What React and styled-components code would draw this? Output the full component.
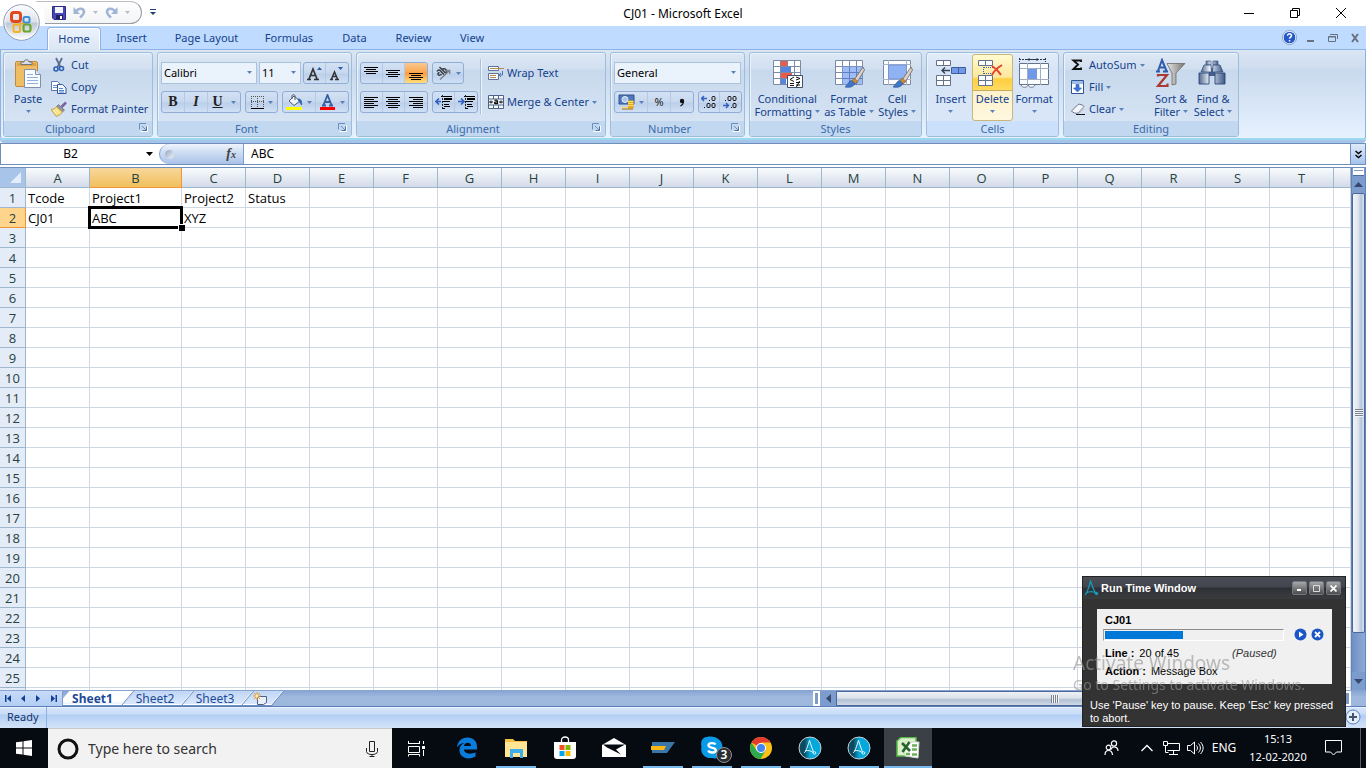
import React from "react";
import styled, { createGlobalStyle, css } from "styled-components";

const ui = `"Noto Sans", "Open Sans", sans-serif`;

const Global = createGlobalStyle`
  * { box-sizing: border-box; }
  html, body { margin: 0; height: 100%; overflow: hidden; }
  body { font: 11px/14px ${ui}; color: #15428b; background: #fff; }
  button, input, select { font: inherit; color: inherit; border: 0; padding: 0; margin: 0; background: none; border-radius: 0; outline: 0; }
  button { white-space: nowrap; }
  svg { display: block; flex: none; }
`;

/* ---------- shell ---------- */
const Desktop = styled.div`
  display: flex;
  flex-direction: column;
  height: 100vh;
  overflow: hidden;
`;

const TitleBar = styled.header`
  position: relative;
  display: grid;
  grid-template-columns: 1fr auto 1fr;
  align-items: center;
  height: 26px;
  background: #fff;
  color: #000;
`;

const OfficeButton = styled.button`
  position: absolute;
  z-index: 3;
  left: 3px;
  top: 4px;
`;

const QuickAccess = styled.div`
  display: flex;
  align-items: center;
  align-self: start;
  margin-left: 36px;
  height: 25px;
`;

const QuickPill = styled.div`
  display: flex;
  align-items: center;
  gap: 7px;
  width: 106px;
  height: 23px;
  padding-left: 16px;
  margin-right: 8px;
  border: 1px solid #9a9da3;
  border-left: 0;
  border-top-color: #b9bcc2;
  border-radius: 0 12px 12px 0;
  background: linear-gradient(#fff, #f3f4f6);
  clip-path: polygon(0 0, 100% 0, 100% 100%, 9px 100%, 8px 40%);
`;

const TitleText = styled.h1`
  margin: 0;
  padding-top: 2px;
  font: 400 12px/16px ${ui};
`;

const CaptionButtons = styled.div`
  display: flex;
  justify-content: flex-end;
  margin-right: 2px;
  button {
    display: grid;
    place-items: center;
    width: 46px;
    height: 26px;
  }
`;

const TabBar = styled.nav`
  display: flex;
  align-items: flex-end;
  height: 24px;
  padding-left: 47px;
  background: #bfdbff;
  border-bottom: 1px solid #8db2e3;
`;

const RibbonTab = styled.button`
  height: 22px;
  min-width: ${(p) => p.$w}px;
  ${(p) => p.$active && css`
    height: 23px;
    margin-bottom: -1px;
    border: 1px solid #8db2e3;
    border-bottom: 0;
    border-radius: 4px 4px 0 0;
    background: linear-gradient(#ebf3fe, #dbe6f4);
    box-shadow: inset 1px 1px #fff, inset -1px 0 #fff;
  `}
`;

const TabTools = styled.div`
  display: flex;
  align-items: center;
  gap: 9px;
  height: 23px;
  margin: 0 5px 0 auto;
`;

/* ---------- ribbon ---------- */
const Ribbon = styled.section`
  display: flex;
  gap: 4px;
  height: 90px;
  padding: 2px 3px 3px 2px;
  border: 1px solid #8db2e3;
  border-top: 0;
  border-bottom: 2px solid #9dd8f2;
  border-radius: 0 0 4px 4px;
  background: linear-gradient(#dbe6f4 0, #cfddef 18px, #c9d9ed 20px, #e7f2ff 100%);
  box-shadow: 0 3px #a6c3e8;
`;

const Group = styled.div`
  display: flex;
  flex-direction: column;
  width: ${(p) => p.$w}px;
  height: 85px;
  border: 1px solid #9ebddb;
  border-radius: 3px;
  box-shadow: inset 1px 1px #ebf3fb;
  background: ${(p) => p.$hot ? "linear-gradient(#e3ecf8, #d6e4f6 17px, #d9e7f8)" : "linear-gradient(#dee8f5, #d1dfef 16px, #c8d9ed 17px, #d9e6f5 100%)"};
`;

const GroupBody = styled.div`
  flex: 1;
  display: flex;
  padding: 1px 3px 0;
`;

const GroupLabel = styled.div`
  position: relative;
  height: 15px;
  line-height: 16px;
  text-align: center;
  padding-right: ${(p) => (p.$launch ? 16 : 0)}px;
  color: #3e6aaa;
  background: ${(p) => (p.$hot ? "#cbe0fa" : "#c1d8f0")};
  border-radius: 0 0 2px 2px;
  button { position: absolute; right: 4px; top: 2px; }
`;

const BigButton = styled.button`
  display: flex;
  flex-direction: column;
  align-items: center;
  width: ${(p) => p.$w}px;
  height: 67px;
  padding-top: 3px;
  line-height: 13px;
  border: 1px solid transparent;
  border-radius: 3px;
  > svg:first-child { margin-bottom: 2px; }
  ${(p) => p.$hot && css`
    border-color: #c9b678;
    background: linear-gradient(#fffbd0 0, #fde79d 22px, #ffcf3e 24px, #ffdb61 35px, #c6ac5f 35px, #c6ac5f 36px, #fdf2cc 36px, #fff8df 100%);
  `}
`;

const Line = styled.span`
  display: flex;
  align-items: center;
  justify-content: center;
  gap: 3px;
  height: 13px;
`;

const SmallStack = styled.div`
  display: flex;
  flex-direction: column;
  margin-left: ${(p) => p.$ml || 0}px;
  width: ${(p) => p.$w}px;
`;

const SmallButton = styled.button`
  display: flex;
  align-items: center;
  gap: ${(p) => p.$gap || 4}px;
  height: 22px;
`;

const Rows = styled.div`
  display: flex;
  flex-direction: column;
  gap: 7px;
  padding-top: 8px;
`;

const Row = styled.div`
  display: flex;
  gap: ${(p) => p.$gap || 4}px;
`;

const Bunch = styled.div`
  display: flex;
  height: 22px;
  border: 1px solid #92aed6;
  border-radius: 3px;
  background: linear-gradient(#d3e1f3, #c7d8ee 10px, #bccfea 11px, #cfe0f5);
  overflow: hidden;
`;

const ToolButton = styled.button`
  display: flex;
  align-items: center;
  justify-content: center;
  gap: 4px;
  width: ${(p) => p.$w || 22}px;
  border-right: 1px solid #b5c8e4;
  color: #222;
  background: ${(p) => (p.$on ? "linear-gradient(#f9c890, #fca851 9px, #fd9a38 10px, #ffe07a)" : "none")};
  &:last-child { border-right: 0; }
`;

const Glyph = styled.span`
  font: ${(p) => (p.$i ? "italic " : "")}700 14px/16px "Liberation Serif", serif;
  text-decoration: ${(p) => (p.$u ? "underline" : "none")};
`;

const ComboBox = styled.div`
  position: relative;
  width: ${(p) => p.$w}px;
  height: 22px;
  border: 1px solid #abc1de;
  background: #eaf2fb;
  color: #000;
  select { appearance: none; width: 100%; height: 100%; padding-left: 2px; }
  svg { position: absolute; right: 4px; top: 8px; pointer-events: none; }
`;

const Divider = styled.div`
  width: 2px;
  height: 55px;
  margin: 5px 6px 0 2px;
  background: #a9bfdc;
  border-right: 1px solid #eef4fb;
`;

/* ---------- formula bar ---------- */
const FormulaBar = styled.div`
  display: flex;
  height: 22px;
  margin-top: 3px;
  border: 1px solid #6e8fbd;
  background: #fff;
  color: #000;
`;

const NameBox = styled.label`
  display: flex;
  align-items: center;
  gap: 6px;
  width: 158px;
  input { width: 139px; text-align: center; font-size: 12px; }
`;

const FxArea = styled.div`
  display: flex;
  align-items: center;
  justify-content: space-between;
  width: 85px;
  padding: 0 7px 0 5px;
  border: 1px solid #7f9fcf;
  border-width: 0 1px;
  border-radius: 11px 0 0 11px;
  background: linear-gradient(#eef4fc, #cfdef3 8px, #a9c2e8);
`;

const Knob = styled.i`
  width: 9px;
  height: 9px;
  border-radius: 50%;
  background: linear-gradient(135deg, #93a5be, #f2f5fa);
`;

const FxButton = styled.button`
  font: italic 700 14px/18px "Liberation Serif", serif;
  color: #444;
  small { font-size: 10px; }
`;

const FormulaInput = styled.input`
  flex: 1;
  min-width: 0;
  padding-left: 7px !important;
  font-size: 12px !important;
`;

const ExpandButton = styled.button`
  display: grid;
  place-items: center;
  width: 15px;
  border-left: 1px solid #6e8fbd !important;
  background: linear-gradient(#dfeafa, #a6c3ec) !important;
`;

/* ---------- sheet ---------- */
const Workbook = styled.main`
  flex: 1;
  min-height: 0;
  display: flex;
  margin-top: 2px;
  border-top: 1px solid #6e8fbd;
`;

const SheetArea = styled.div`
  flex: 1;
  min-width: 0;
  overflow: hidden;
`;

const Sheet = styled.table`
  width: 100%;
  table-layout: fixed;
  border-spacing: 0;
  font: 13px/18px "Open Sans", "Noto Sans", sans-serif;
  color: #000;
`;

const ColHead = styled.th`
  height: 20px;
  padding: 0;
  font-weight: 400;
  color: #27413e;
  border-right: 1px solid ${(p) => (p.$sel ? "#f29536" : "#9eb6ce")};
  border-bottom: 1px solid ${(p) => (p.$sel ? "#f29536" : "#9eb6ce")};
  background: ${(p) => (p.$sel ? "linear-gradient(#f8d79b, #f1c05d)" : "linear-gradient(#f9fcfd, #d3dbe9)")};
`;

const Corner = styled.th`
  padding: 0 4px 0 0;
  border-right: 1px solid #9eb6ce;
  border-bottom: 1px solid #9eb6ce;
  background: #a9c4e9;
  svg { margin-left: auto; }
`;

const RowHead = styled.th`
  height: 20px;
  padding: 0;
  font-weight: 400;
  color: #27413e;
  border-right: 1px solid ${(p) => (p.$sel ? "#f29536" : "#9eb6ce")};
  border-bottom: 1px solid ${(p) => (p.$sel ? "#f29536" : "#9eb6ce")};
  background: ${(p) => (p.$sel ? "#ffd58d" : "#e4ecf7")};
`;

const Cell = styled.td`
  position: relative;
  height: 20px;
  padding: 0 0 0 2px;
  white-space: nowrap;
  border-right: 1px solid #d0d7e5;
  border-bottom: 1px solid #d0d7e5;
  ${(p) => p.$sel && css`
    &::before { content: ""; position: absolute; z-index: 1; inset: -2px; border: 3px solid #000; }
    &::after { content: ""; position: absolute; z-index: 2; right: -4px; bottom: -4px; width: 6px; height: 6px; background: #000; border: 1px solid #fff; border-width: 1px 0 0 1px; }
  `}
`;

const VScroll = styled.div`
  display: flex;
  flex-direction: column;
  width: 15px;
  border: 1px solid #6384b8;
  border-width: 0 1px;
  background: #7c9ccd;
  button { display: grid; place-items: center; height: 18px; }
`;

const SplitBox = styled.div`
  height: 7px;
  margin: 0 1px;
  border: 1px solid #fff;
  border-width: 2px 1px;
  background: linear-gradient(#7e9bc6 1px, #fff 1px);
  box-shadow: 0 1px #4d6c9d;
`;

const VThumb = styled.div`
  flex: 441;
  display: grid;
  place-items: center;
  border: 1px solid #4f6798;
  border-radius: 2px;
  background: linear-gradient(90deg, #f0f3f8, #e0e6ee 45%, #b3c5dc 75%, #dce6f2);
`;

const VTrack = styled.div`
  flex: 39;
  background: linear-gradient(90deg, #6f8fc3, #8dabd8);
`;

const Grip = styled.i`
  width: 8px;
  height: 8px;
  background: repeating-linear-gradient(${(p) => (p.$h ? "90deg" : "180deg")}, #7c828c 0 1px, #f2f4f7 1px 2px);
`;

const SheetBar = styled.div`
  display: flex;
  height: 17px;
  border-top: 1px solid #87a3cf;
  border-bottom: 1px solid #5b7fb5;
  background: linear-gradient(#88a5d3, #9fb8dd 6px, #9db6dc);
`;

const SheetNav = styled.div`
  display: flex;
  position: relative;
  z-index: 1;
  width: 63px;
  padding-left: 1px;
  background: linear-gradient(#c8dbf8, #b2cdf4);
  border-right: 1px solid #7d9ccb;
  button { display: grid; place-items: center; width: 15px; }
`;

const SheetTab = styled.button`
  position: relative;
  display: grid;
  place-items: center;
  z-index: 0;
  width: ${(p) => p.$w}px;
  height: 15px;
  padding-right: 6px !important;
  font-size: 12px;
  line-height: 14px;
  font-weight: ${(p) => (p.$active ? 700 : 400)};
  color: #1d4a98;
  &::before {
    content: "";
    position: absolute;
    z-index: -1;
    inset: 0;
    transform: skewX(-40deg);
    border: 1px solid #6f8fc2;
    border-top: 0;
    border-left: 0;
    background: ${(p) => (p.$active ? "linear-gradient(#fff 70%, #e3eefd)" : "linear-gradient(#c0d6f6, #dce9fb)")};
    box-shadow: inset -1px -1px #fff;
  }
`;

const HScroll = styled.div`
  display: flex;
  width: 553px;
  margin-left: auto;
  padding-right: 15px;
`;

const HSplit = styled.div`
  width: 7px;
  border: 2px solid #fff;
  background: #7e9bc6;
`;

const HArrow = styled.button`
  display: grid;
  place-items: center;
  width: 16px;
  background: #7c9ccd !important;
`;

const HThumb = styled.div`
  flex: 438;
  display: grid;
  place-items: center;
  border: 1px solid #4f6798;
  background: linear-gradient(#eef2f7, #dbe1ea 45%, #b3c1d3 60%, #cfdae8);
`;

const HTrack = styled.div`
  flex: 54;
  background: #7c9ccd;
`;

const StatusBar = styled.footer`
  display: flex;
  height: 21px;
  background: linear-gradient(#fff 0, #d5e5fb 1px, #c9dcf8 7px, #b1cef4 8px, #d3e3f9 100%);
  span { width: 47px; padding: 3px 0 0 7px; border-right: 1px solid #8db2e3; color: #15326b; }
  svg { margin: 2px 5px 0 auto; }
`;

/* ---------- taskbar ---------- */
const TaskBar = styled.div`
  display: flex;
  height: 40px;
  background: #060a11;
  color: #fff;
`;

const StartButton = styled.button`
  display: grid;
  place-items: center;
  width: 48px;
`;

const SearchBox = styled.label`
  display: flex;
  align-items: center;
  gap: 9px;
  width: 344px;
  padding: 0 13px 0 9px;
  background: #f2f2f2;
  border-top: 1px solid #c9c9c9;
  input { flex: 1; min-width: 0; font-size: 14px; color: #333; }
  input::placeholder { color: #333; opacity: 1; }
`;

const Apps = styled.div`
  display: flex;
  gap: 1px;
  > button:first-child { margin-right: 2px; }
`;

const AppButton = styled.button`
  position: relative;
  display: grid;
  place-items: center;
  width: 48px;
  background: ${(p) => (p.$active ? "#3b3f46" : "none")};
  &::after {
    content: "";
    display: ${(p) => (p.$open || p.$active ? "block" : "none")};
    position: absolute;
    left: ${(p) => (p.$active ? 0 : 4)}px;
    right: ${(p) => (p.$active ? 0 : 4)}px;
    bottom: 0;
    height: 2px;
    background: #76b9ed;
  }
`;

const Badge = styled.span`
  position: absolute;
  left: 28px;
  top: 19px;
  width: 16px;
  height: 16px;
  border: 1px solid #8b8e92;
  border-radius: 50%;
  background: #2b2d30;
  font: 600 12px/14px ${ui};
`;

const Tray = styled.div`
  display: flex;
  align-items: center;
  margin-left: auto;
  font-size: 12px;
`;

const TrayButton = styled.button`
  display: grid;
  place-items: center;
  width: ${(p) => p.$w}px;
  height: 40px;
`;

const Clock = styled.time`
  width: 74px;
  text-align: center;
  font-size: 11px;
  line-height: 18px;
`;

const ShowDesktop = styled.button`
  width: 6px;
  height: 40px;
  margin-left: 9px !important;
  border-left: 1px solid #5a5d62 !important;
`;

/* ---------- run time window ---------- */
const RunWindow = styled.section`
  position: fixed;
  z-index: 5;
  right: 20px;
  bottom: 41px;
  width: 264px;
  height: 151px;
  border: 1px solid #232323;
  background: #333;
  color: #fff;
  font: 11px/13px "Liberation Sans", Arial, sans-serif;
`;

const RunTitle = styled.header`
  display: flex;
  align-items: center;
  gap: 2px;
  height: 22px;
  padding: 0 4px 0 1px;
  background: linear-gradient(#4a4d55, #42454d 10px, #2e3035 11px, #3a3b3f);
  h2 { flex: 1; margin: 0; font-size: 11px; font-weight: 700; }
`;

const RunCaption = styled.button`
  display: grid;
  place-items: center;
  width: 15px;
  height: 14px;
  border: 1px solid #74777c !important;
  border-radius: 2px !important;
  background: linear-gradient(#a7a8aa, #4b4c4e) !important;
`;

const RunPanel = styled.div`
  margin: 10px 13px 0 14px;
  padding: 5px 8px 0;
  height: 75px;
  background: #f0f0f0;
  color: #000;
`;

const RunProgressRow = styled.div`
  display: flex;
  align-items: center;
  gap: 4px;
  margin: 1px 0 6px -2px;
  button:first-of-type { margin-left: 6px; }
`;

const RunProgress = styled.div`
  width: 183px;
  height: 12px;
  padding: 1px;
  border: 1px solid #fff;
  border-top-color: #8c8c8c;
  border-left-color: #a0a0a0;
  background: #f0f0f0;
  i { display: block; width: 44%; height: 8px; background: #0078d7; }
`;

const RunLine = styled.p`
  display: flex;
  gap: 5px;
  margin: 0 0 5px;
  em { margin-left: 48px; color: #333; }
`;

const RunHint = styled.p`
  margin: 15px 6px 0 7px;
`;

const Watermark = styled.div`
  position: fixed;
  z-index: 6;
  left: calc(100vw - 293px);
  bottom: 73px;
  pointer-events: none;
  color: rgba(150, 150, 150, 0.62);
  font: 14px/20px ${ui};
  white-space: nowrap;
  strong { display: block; font-weight: 400; font-size: 19px; line-height: 24px; }
`;

/* ---------- icons ---------- */
const Svg = ({ w = 16, h = w, children, ...r }) => (
  <svg width={w} height={h} viewBox={`0 0 ${w} ${h}`} fill="none" aria-hidden="true" {...r}>{children}</svg>
);
const Caret = ({ c = "#5b82bd" }) => (
  <Svg w={5} h={3}><path d="M0 0h5L2.500 3z" fill={c} /></Svg>
);
const Launcher = () => (
  <button aria-label="More options">
    <Svg w={9} h={9} stroke="#6c8fbf"><path d="M.5 6.500V.5H7" /><path d="M3 3l4 4" /><path d="M3.500 7.500h4v-4" stroke="#4a709f" /><path d="M1.500 8.500h7v-6" stroke="#fff" /></Svg>
  </button>
);

const OfficeLogo = () => (
  <Svg w={37} h={37}>
    <defs>
      <linearGradient id="orb" x1="0" y1="0" x2="0" y2="1"><stop offset="0" stopColor="#fdfdfe" /><stop offset=".48" stopColor="#dde2ea" /><stop offset=".52" stopColor="#bcc7d6" /><stop offset="1" stopColor="#fff" /></linearGradient>
    </defs>
    <circle cx="18.500" cy="18.500" r="17.800" fill="url(#orb)" stroke="#8e9cb0" />
    <circle cx="18.500" cy="18.500" r="16.500" stroke="#fff" opacity=".7" />
    <rect x="8.500" y="8.500" width="9" height="9" rx="2.500" stroke="#e2481b" strokeWidth="3" />
    <path d="M16 14.500h3" stroke="#e2481b" strokeWidth="2" />
    <rect x="20.500" y="13" width="6" height="5.500" rx="1.500" stroke="#3b8fd4" strokeWidth="2" />
    <rect x="10.500" y="20.500" width="6.500" height="7.500" rx="1.500" stroke="#f5b21c" strokeWidth="2" />
    <rect x="20.500" y="20.500" width="7" height="7" rx="2" stroke="#6aa52c" strokeWidth="2.200" />
    <path d="M17 19.500h4" stroke="#f6a21c" strokeWidth="1.500" />
  </Svg>
);
const Save = () => (
  <Svg w={14}><path d="M.5.5h13v13H2l-1.500-1.500z" fill="#4747b8" stroke="#2b2b86" /><path d="M3 1h8v6H3z" fill="#f2f5fc" /><path d="M4 9h7v4H4z" fill="#20205f" /><path d="M8 10h2v3H8z" fill="#fff" /></Svg>
);
const Undo = ({ flip }) => (
  <Svg w={13} h={13}><g transform={flip ? "matrix(-1 0 0 1 13 0)" : undefined}><path d="M3 5.500C5 2 10.500 1.500 11 5.500c.3 2.500-2 4-4 6" stroke="#a3b5d6" strokeWidth="2.600" /><path d="M.5 1v7h6.500z" fill="#a3b5d6" /></g></Svg>
);
const CustomizeQat = () => (
  <Svg w={6} h={7}><path d="M0 .5h6" stroke="#1f3f77" /><path d="M0 3h6L3 6z" fill="#1f3f77" /></Svg>
);
const Paste = () => (
  <Svg w={32}>
    <rect x="3.500" y="3.500" width="22" height="25" rx="1.500" fill="#f0be62" stroke="#c08a3a" />
    <path d="M5 5h19v3H5z" fill="#dba34a" />
    <path d="M9 6.500V4h3c0-3 5-3 5 0h3v2.500z" fill="#d9dce2" stroke="#70757e" />
    <path d="M12.500 11.500h11l5 5v13h-16z" fill="#f8fbff" stroke="#7f90ad" />
    <path d="M23.500 11.500v5h5" fill="#dfe9f7" stroke="#7f90ad" />
    <path d="M15 16.500h6M15 19.500h11M15 22.500h11M15 25.500h11" stroke="#93b0dc" />
  </Svg>
);
const Cut = () => (
  <Svg><path d="M5 1l4.500 9M11 1L6.500 10" stroke="#5b6f91" strokeWidth="1.800" /><circle cx="5" cy="12" r="2" stroke="#2d5fb3" strokeWidth="1.600" /><circle cx="10.500" cy="11.500" r="2" stroke="#2d5fb3" strokeWidth="1.600" /></Svg>
);
const Copy = () => (
  <Svg><path d="M.5 2.500h6l3 3v6h-9z" fill="#fff" stroke="#5b79b0" /><path d="M2 6.500h4M2 8.500h4" stroke="#6d92cf" /><path d="M6.500 5.500h5l3.500 3.500v5.500H6.500z" fill="#f4f8ff" stroke="#33569b" /><path d="M8 9.500h4M8 11.500h5M8 13h5" stroke="#5585d0" /></Svg>
);
const Painter = () => (
  <Svg><path d="M10.500 6L15 1.500" stroke="#7b5fa5" strokeWidth="2.500" /><path d="M7.500 3.500l6 5.500-2 2-6-5.500z" fill="#8e95a3" stroke="#5c6270" strokeWidth=".6" /><path d="M5.500 5.500L11.500 11c-2 3-4.500 3.800-6.500 4.300L0 8.500C2.500 8 4.500 7.500 5.500 5.500z" fill="#f4dc7c" stroke="#b28a2b" strokeWidth=".7" /><path d="M2.500 9l3.500 4.500M4.500 8l4 4.500" stroke="#fff9cf" /></Svg>
);
const GrowFont = () => (
  <Svg w={16} h={15}><path d="M0 13.500h4M7 13.500h5M2 13L6 3l4 10M3.500 9.500h5" stroke="#333" strokeWidth="1.700" /><path d="M10 4h5l-2.500-3z" fill="#2b5aa8" /></Svg>
);
const ShrinkFont = () => (
  <Svg w={16} h={15}><path d="M1 13.500h3M6 13.500h4M2.500 13L5.500 6l3 7M3.500 10.500h4" stroke="#333" strokeWidth="1.500" /><path d="M9 1h5l-2.500 3z" fill="#2b5aa8" /></Svg>
);
const FontColor = () => (
  <Svg w={17} h={17}><path d="M3 11.500h4M10 11.500h4M4.500 11L8.500 1l4 10M6 8h5" stroke="#355f9f" strokeWidth="1.800" /><path d="M1 13h15v3H1z" fill="#f00" /></Svg>
);
const Borders = () => (
  <Svg w={13}><path d="M.5 0v11M12.500 0v11M6.500 0v11M0 .5h13M0 5.500h13" stroke="#555" strokeDasharray="1 1" /><path d="M0 12.500h13" stroke="#000" /></Svg>
);
const FillColor = () => (
  <Svg w={17} h={17}><path d="M3 7l5-5 6 5-6 4.500z" fill="#eef3fa" stroke="#4e5b70" /><path d="M6 5V2c0-2 3-1.500 3 0v4" stroke="#4e5b70" /><path d="M12 5c3 0 4 2 3.500 6-1-2-2-3-2.500-4z" fill="#2d62b8" stroke="#2d62b8" /><path d="M0 13h16v3H0z" fill="#ff0" /></Svg>
);
const Lines = ({ rows, w = 15, h = 15 }) => (
  <Svg w={w} h={h}>{rows.map(([x, y, l], i) => <path key={i} d={`M${x} ${y}.5h${l}`} stroke="#000" />)}</Svg>
);
const Orientation = () => (
  <Svg w={17}><g stroke="#33373f" strokeWidth="1.400"><path d="M2 6.500c1-2 3-2 4 0l3 3M4.500 7.500c-3.500 1-.5 4.500 2 1.500M4.500 2l6 6M7 5c1.500-3 6-.5 4 3.500" /><path d="M5 14.500L14.500 5.500M11 5.500h3.700V9" stroke="#7c828c" /></g></Svg>
);
const Indent = ({ right }) => (
  <Svg w={17} h={15}><path d="M6 1.500h11M8 6.500h7M9 9.500h5M8 13.500h2" stroke="#000" /><path d="M9 3.500h8M9 4.500h8M9 9.500h5M9 11.500h6" stroke="#000" /><path d="M7.500 0v15" stroke="#222" strokeDasharray="2 1" /><path d={right ? "M0 6.500h5M3 3.500l3 3-3 3" : "M1 6.500h5M4 3.500l-3 3 3 3"} stroke="#2f5fc0" strokeWidth="1.700" /></Svg>
);
const WrapText = () => (
  <Svg><path d="M.5 1.500h10v4H.5zM.5 8.500h10v6H.5z" fill="#f7faff" stroke="#5e7397" /><path d="M2 3.500h14M2 10.500h6M2 12.500h6" stroke="#b98a55" /><path d="M14.500 6v4h-3M13 8l-2 2 2 2" stroke="#4b73b4" /></Svg>
);
const Merge = () => (
  <Svg><path d="M.5 1.500h15v13H.5zM.5 5h15M.5 11h15M5.500 1v4M10.500 1v4M5.500 11v4M10.500 11v4" fill="#f7faff" stroke="#4d6284" /><path d="M1 8h4M11 8h4M3 6.500v3M13 6.500v3" stroke="#111" /><path d="M6.500 6.500c2-1 3 0 3 1v2.500M9.500 8c-4-.5-4 2.500 0 1.500" stroke="#111" strokeWidth="1.300" /></Svg>
);
const Currency = () => (
  <Svg w={17}><path d="M1 1h15v9H1z" fill="#4f78ba" stroke="#2f528d" /><ellipse cx="7" cy="5.500" rx="3" ry="3" fill="#a9c4e9" stroke="#e4edf8" /><path d="M10 6.500h5.500v8H10z" fill="#e5a820" /><path d="M10 7.500h5.500M10 9.500h5.500M10 11.500h5.500M3 13.500h7" stroke="#ffdc62" /><path d="M4 15h11" stroke="#a9720c" /></Svg>
);
const CommaStyle = () => (
  <Svg w={6} h={9}><circle cx="3" cy="3" r="2.200" fill="#111" /><path d="M4.500 3c0 3-1 4-3 5" stroke="#111" strokeWidth="1.300" /></Svg>
);
const IncDecimal = () => (
  <Svg w={17} h={14}><path d="M0 3.500h6M3 1L.5 3.500 3 6" stroke="#2f5fc0" strokeWidth="1.400" /><path d="M8 5h1v1H8zM3 12h1v1H3z" fill="#111" /><g stroke="#111"><rect x="11" y="1.500" width="3" height="4" rx="1" /><rect x="6" y="8.500" width="3" height="4" rx="1" /><rect x="11" y="8.500" width="3" height="4" rx="1" /></g></Svg>
);
const DecDecimal = () => (
  <Svg w={17} h={14}><path d="M1 10.500h6M4 8l2.500 2.500L4 13" stroke="#2f5fc0" strokeWidth="1.400" /><path d="M3 5h1v1H3zM9 12h1v1H9z" fill="#111" /><g stroke="#111"><rect x="6" y="1.500" width="3" height="4" rx="1" /><rect x="11" y="1.500" width="3" height="4" rx="1" /><rect x="11" y="8.500" width="3" height="4" rx="1" /></g></Svg>
);
const gridBase = (
  <>
    <path d="M2.500 2.500h27v24h-27z" fill="#fdfeff" />
    <path d="M2.500 2.500h27v24h-27zM9.500 2v25M16.500 2v25M23.500 2v25M2 8.500h28M2 14.500h28M2 20.500h28" stroke="#7d8aa5" />
  </>
);
const brush = (
  <>
    <path d="M30 9l-9 13 3 2.500L31.500 12z" fill="#d8d3cb" stroke="#6b6258" strokeWidth=".8" />
    <path d="M21 20l4 3.500-3 2.500-3.500-2.500z" fill="#c98b3c" stroke="#7b5526" strokeWidth=".6" />
    <path d="M18.500 22.500c-2 0-3 3-6.500 6.500 4 1 8.500 0 10-3.500z" fill="#3f76c8" stroke="#274f94" strokeWidth=".6" />
  </>
);
const CondFormat = () => (
  <Svg w={32}>{gridBase}<path d="M10 3h6v5h-6zM10 15h11v5H10z" fill="#ee5a48" /><path d="M10 9h10v5H10zM10 21h5v5h-5z" fill="#5585e0" /><path d="M16.500 17.500h15v12h-15z" fill="#fff" stroke="#41506b" /><path d="M23 19l-4 2.500 4 2M19 25.500h4M19 27.500h4M25 19l4 1.500-4 1.500M25 24.500h4M25 27h4M28.500 23l-3 6" stroke="#111" /></Svg>
);
const FormatTable = () => (
  <Svg w={32}>{gridBase}<path d="M9.500 8.500h20v18h-20z" fill="#7fa6f2" opacity=".75" /><path d="M9.500 14.500h20M9.500 20.500h20M16.500 9v18M23.500 9v18" stroke="#5c7fc4" />{brush}</Svg>
);
const CellStyles = () => (
  <Svg w={32}><path d="M2.500 2.500h27v24h-27z" fill="#fdfeff" stroke="#7d8aa5" /><path d="M7.500 2v25M25.500 2v25M2 6.500h28M2 21.500h28" stroke="#aab4c8" /><path d="M7.500 7h18v14h-18z" fill="#8fb2f4" stroke="#7895d2" />{brush}</Svg>
);
const miniCells = (
  <path d="M1.500 2.500h14v5h-14zM8.500 2.500v5M1.500 17.500h14v10h-14zM8.500 17.500v10M1.500 22.500h14" fill="#fdfeff" stroke="#66728c" />
);
const InsertCells = () => (
  <Svg w={32}>{miniCells}<path d="M16.500 9.500h14v6h-14zM23.500 9.500v6" fill="#7199e8" stroke="#3c5c9f" /><path d="M7 12.500h8M10 9.500l-3 3 3 3" stroke="#374258" strokeWidth="1.400" /></Svg>
);
const DeleteCells = () => (
  <Svg w={32}>{miniCells}<path d="M7 9.500h10M7 15.500h10M6.500 9v7" stroke="#3a63c2" strokeDasharray="1 1" /><path d="M15 8c5 3 6 5 9 9M25 7c-5 3-8 6-10 10" stroke="#e8432c" strokeWidth="2" /></Svg>
);
const FormatCells = () => (
  <Svg w={32}><path d="M1.500 5.500h29v21h-29z" fill="#fdfeff" stroke="#66728c" /><path d="M9.500 5v22M22.500 5v22M2 10.500h29M2 21.500h29" stroke="#a2adc2" /><path d="M10 11h9v10h-9z" fill="#6f98e8" /><path d="M1 1.500h26M1.500 0v4M27.500 0v4" stroke="#2e3950" strokeDasharray="2 1" /><path d="M9 1.500h11M11 0v3M19 0v3" stroke="#2e3950" /><path d="M3 27c1 3 6 3 7 0 1 3 6 3 7 0" fill="#fdfeff" stroke="#66728c" /></Svg>
);
const Sigma = () => (
  <Svg><path d="M11 5V3.500H3.500L8 7.500l-4.500 4.500H11v-1.500" stroke="#111" strokeWidth="1.900" /></Svg>
);
const FillDown = () => (
  <Svg><path d="M1.500 1.500h12v13h-12z" fill="#fff" stroke="#31538f" /><path d="M2 2h11v3H2z" fill="#9fbbe9" /><path d="M6 5.500h3V9h2.500l-4 4-4-4H6z" fill="#3977dc" stroke="#2456ac" strokeWidth=".6" /></Svg>
);
const Eraser = () => (
  <Svg><path d="M1.500 10L8 3.500c1-1 5 .5 6 2L8 12c-1 1-6-.5-6.500-2z" fill="#f5f6fa" stroke="#6b7590" /><path d="M8 12l6-6.500v2.500L8.500 13.500z" fill="#b9c1d2" /><path d="M6 13.500h9" stroke="#111" /></Svg>
);
const SortFilter = () => (
  <Svg w={32}>
    <defs><linearGradient id="fun"><stop offset="0" stopColor="#e6e6e6" /><stop offset="1" stopColor="#77736d" /></linearGradient></defs>
    <path d="M1 13.500h4M8 13.500h5M3 13L7 2l4.500 11M4 9.500h6" stroke="#2f5cab" strokeWidth="2" />
    <path d="M3 18.500V17h9L3 28h9.500v-2.500" stroke="#a93a35" strokeWidth="2.200" />
    <path d="M12 5.500h18L21 15v11l-4 1V15z" fill="url(#fun)" stroke="#6d6a66" strokeWidth=".8" />
  </Svg>
);
const Binoculars = () => (
  <Svg w={32}>
    <defs><linearGradient id="bin"><stop offset="0" stopColor="#52688f" /><stop offset=".4" stopColor="#eef3fa" /><stop offset="1" stopColor="#3b5688" /></linearGradient></defs>
    <g transform="translate(-1 0)">
      <path d="M13 10h6v8h-6z" fill="#46608e" />
      <path d="M10 3h5v4h-5zM17 3h5v4h-5z" fill="url(#bin)" stroke="#46598a" strokeWidth=".7" />
      <path d="M8 7h7l.5 7H5zM17 7h7l3 7H16.500z" fill="url(#bin)" stroke="#34507f" strokeWidth=".8" />
      <path d="M3 15h10v11H3zM19 15h10v11H19z" fill="url(#bin)" stroke="#2b4576" strokeWidth=".9" />
    </g>
  </Svg>
);
const Help = () => (
  <Svg w={15}><circle cx="7.500" cy="7.500" r="6.500" fill="#2458c8" stroke="#fff" strokeWidth="1.300" /><circle cx="7.500" cy="7.500" r="7" stroke="#5779b5" strokeWidth=".7" /><path d="M5.500 5.800c0-2.800 4.200-2.500 4 0 0 1.300-2 1.500-2 3" stroke="#fff" strokeWidth="1.500" /><path d="M6.800 10h1.500v1.500H6.800z" fill="#fff" /></Svg>
);

const Autom = () => (
  <Svg w={24}><defs><linearGradient id="au"><stop offset=".25" stopColor="#0b4a5f" /><stop offset=".5" stopColor="#05a8dc" /></linearGradient></defs><circle cx="12" cy="12" r="11" fill="url(#au)" stroke="#c9cfd3" /><path d="M6 17c2-1 4-8 5.500-12.500 1 3 2.500 7.500 4 11.500M7 15c3-1 5.500-.5 8 1.500" stroke="#fff" strokeWidth=".9" /><circle cx="16.500" cy="17" r="1.300" stroke="#fff" strokeWidth=".8" /></Svg>
);
const apps = [
  { name: "Task View", icon: <Svg w={17} h={17} stroke="#fff"><path d="M.5 4V1M.5 3.500h11M11.500 1v3M.5 6.500h11v6H.5zM.5 16.500v-2h11v2M15.500 1v3M15.500 10v6" /><path d="M14 6h3v3h-3z" fill="#fff" stroke="none" /></Svg> },
  { name: "Edge", icon: <Svg w={22}><path d="M1 10.500C1.500 4 6 .5 11.500.5c6 0 9.500 4 9.500 9v3H8c.2 4 6 5.500 11.500 2.700v4.300C11 24 3.300 20 3.500 13 3.600 9.500 5.500 7 8.500 6 5.500 6 2.500 8 1 10.500zM8 9h7c0-4.300-6.300-4.300-7 0z" fill="#0a7ddc" /></Svg> },
  { name: "File Explorer", open: true, icon: <Svg w={22} h={20}><path d="M0 1h8l2 2h12v16H0z" fill="#f5c243" /><path d="M0 4h22v15H0z" fill="#ffe594" /><path d="M5 11h13v9h-3v-5H8v5H5z" fill="#3eaee8" /></Svg> },
  { name: "Store", icon: <Svg w={24}><path d="M8.500 6V4c0-4 7-4 7 0v2" stroke="#fff" strokeWidth="1.300" /><path d="M1 6h22v14c0 2-1 3-3 3H4c-2 0-3-1-3-3z" fill="#fff" /><path d="M6.500 9H11.500v5h-5z" fill="#f25022" /><path d="M12.500 9h5v5h-5z" fill="#7fba00" /><path d="M6.500 15h5v5h-5z" fill="#00a4ef" /><path d="M12.500 15h5v5h-5z" fill="#ffb900" /></Svg> },
  { name: "Mail", icon: <Svg w={24} h={20}><path d="M0 7L12 0l12 7v12H0z" fill="#fff" /><path d="M1 6.500h22l-9 5 5 5-14-7z" fill="#060a11" /></Svg> },
  { name: "SAP Logon", open: true, icon: <Svg w={24} h={12}><path d="M1 0h23l-8 11H1z" fill="#3b76a8" /><path d="M0 4h15l-2 4H0z" fill="#fdb813" /></Svg> },
  { name: "Skype", open: true, badge: "3", icon: <Svg w={24}><path d="M7 1c8-2 16 3 15.500 11 2 6-4 12-10 10C5 23 0 17 1.500 11 0 5 3 1 7 1z" fill="#0a9be8" /><path d="M15.500 8.500c-1-2-7-2-7 .7 0 3.500 7.300 1.700 7.300 5 0 3-6.300 3-7.600.3" stroke="#fff" strokeWidth="2.300" /></Svg> },
  { name: "Chrome", open: true, icon: <Svg w={22}><circle cx="11" cy="11" r="11" fill="#fbc116" /><path d="M11 11L1.500 5.500A11 11 0 0 1 20.500 5.500H11z" fill="#e33b2e" /><path d="M1.500 5.500A11 11 0 0 0 10.500 22L15.500 13.500 6.500 13.500z" fill="#2da94f" /><circle cx="11" cy="11" r="5" fill="#fff" /><circle cx="11" cy="11" r="4" fill="#4285f4" /></Svg> },
  { name: "Automation", open: true, icon: <Autom /> },
  { name: "Automation runner", open: true, icon: <Autom /> },
  { name: "Excel", active: true, icon: <Svg w={24} h={22}><path d="M1 4l4-3.500h15V19H1z" fill="#d9f0c8" stroke="#58b947" strokeWidth="1.500" /><path d="M9 5h14l-1 16-13-2z" fill="#fff" stroke="#ccd6c5" /><path d="M16 8.500h5M16 12.500h5M10 17h4M16 17.500h5" stroke="#6fae5c" strokeWidth="2.600" /><path d="M6 6l8 8M13.500 5L6.500 15" stroke="#27662b" strokeWidth="2.600" /></Svg> },
];

/* ---------- data ---------- */
const columns = "ABCDEFGHIJKLMNOPQRST".split("");
const cells = {
  A1: "Tcode", B1: "Project1", C1: "Project2", D1: "Status",
  A2: "CJ01", B2: "ABC", C2: "XYZ",
};
const tabs = [["Home", 54], ["Insert", 61], ["Page Layout", 89], ["Formulas", 76], ["Data", 55], ["Review", 63], ["View", 54]];

const Combo = ({ w, label, value }) => (
  <ComboBox $w={w}>
    <select aria-label={label} defaultValue={value}><option>{value}</option></select>
    <Caret />
  </ComboBox>
);

const RibbonGroup = ({ w, label, launch, hot, children }) => (
  <Group $w={w} $hot={hot}>
    <GroupBody>{children}</GroupBody>
    <GroupLabel $launch={launch} $hot={hot}>{label}{launch && <Launcher />}</GroupLabel>
  </Group>
);

const Big = ({ w, icon, a, b, hot }) => (
  <BigButton $w={w} $hot={hot}>
    {icon}
    <Line>{a}</Line>
    <Line>{b}<Caret /></Line>
  </BigButton>
);

const NavArrow = ({ label, d }) => (
  <button aria-label={label}><Svg w={7} h={7}><path d={d} fill="#123f94" /></Svg></button>
);

export default function App() {
  return (
    <Desktop>
      <Global />
      <TitleBar>
        <OfficeButton aria-label="Office"><OfficeLogo /></OfficeButton>
        <QuickAccess>
          <QuickPill>
            <button aria-label="Save"><Save /></button>
            <button aria-label="Undo"><Undo /></button>
            <Caret c="#b5bbc5" />
            <button aria-label="Redo"><Undo flip /></button>
            <Caret c="#b5bbc5" />
          </QuickPill>
          <button aria-label="Customize"><CustomizeQat /></button>
        </QuickAccess>
        <TitleText>CJ01 - Microsoft Excel</TitleText>
        <CaptionButtons>
          <button aria-label="Minimize"><Svg w={10} stroke="#000"><path d="M0 5.500h10" /></Svg></button>
          <button aria-label="Restore"><Svg w={10} stroke="#000"><path d="M.5 2.500h7v7h-7zM2.500 2V.5h7v7H8" /></Svg></button>
          <button aria-label="Close"><Svg w={10} stroke="#000"><path d="M0 0l10 10M10 0L0 10" /></Svg></button>
        </CaptionButtons>
      </TitleBar>

      <TabBar>
        {tabs.map(([t, w], i) => <RibbonTab key={t} $w={w} $active={i === 0}>{t}</RibbonTab>)}
        <TabTools>
          <button aria-label="Help"><Help /></button>
          <button aria-label="Minimize workbook"><Svg w={12} h={10}><path d="M1 8h7" stroke="#66707f" strokeWidth="2" /></Svg></button>
          <button aria-label="Restore workbook"><Svg w={13} h={10} stroke="#66707f"><path d="M1.500 3.500h7v5h-7zM1 4h8M3 1.500h7.500V6" /></Svg></button>
          <button aria-label="Close workbook"><Svg w={12} h={10} stroke="#66707f" strokeWidth="2"><path d="M3 1l6 8M9 1L3 9" /></Svg></button>
        </TabTools>
      </TabBar>

      <Ribbon>
        <RibbonGroup w={150} label="Clipboard" launch>
          <Big w={42} icon={<Paste />} a="Paste" />
          <SmallStack $w={98} $ml={2}>
            <SmallButton><Cut />Cut</SmallButton>
            <SmallButton><Copy />Copy</SmallButton>
            <SmallButton><Painter />Format Painter</SmallButton>
          </SmallStack>
        </RibbonGroup>

        <RibbonGroup w={195} label="Font" launch>
          <Rows>
            <Row $gap={2}>
              <Combo w={96} label="Font" value="Calibri" />
              <Combo w={42} label="Font size" value="11" />
              <Bunch>
                <ToolButton aria-label="Grow font" $w={22}><GrowFont /></ToolButton>
                <ToolButton aria-label="Shrink font" $w={22}><ShrinkFont /></ToolButton>
              </Bunch>
            </Row>
            <Row>
              <Bunch>
                <ToolButton $w={23}><Glyph>B</Glyph></ToolButton>
                <ToolButton $w={23}><Glyph $i>I</Glyph></ToolButton>
                <ToolButton $w={32}><Glyph $u>U</Glyph><span /><Caret /></ToolButton>
              </Bunch>
              <Bunch><ToolButton aria-label="Borders" $w={31}><Borders /><Caret /></ToolButton></Bunch>
              <Bunch>
                <ToolButton aria-label="Fill color" $w={33}><FillColor /><Caret /></ToolButton>
                <ToolButton aria-label="Font color" $w={32}><FontColor /><Caret /></ToolButton>
              </Bunch>
            </Row>
          </Rows>
        </RibbonGroup>

        <RibbonGroup w={250} label="Alignment" launch>
          <Rows>
            <Row>
              <Bunch>
                <ToolButton aria-label="Top align"><Lines rows={[[0, 1, 14], [2, 3, 10], [0, 5, 14], [2, 7, 10]]} /></ToolButton>
                <ToolButton aria-label="Middle align"><Lines rows={[[0, 4, 14], [2, 6, 10], [0, 8, 14], [2, 10, 10]]} /></ToolButton>
                <ToolButton aria-label="Bottom align" $on><Lines rows={[[0, 7, 14], [2, 9, 10], [0, 11, 14], [2, 13, 10]]} /></ToolButton>
              </Bunch>
              <Bunch><ToolButton aria-label="Orientation" $w={30}><Orientation /><Caret /></ToolButton></Bunch>
            </Row>
            <Row>
              <Bunch>
                <ToolButton aria-label="Align left"><Lines rows={[[0, 2, 14], [0, 4, 10], [0, 6, 14], [0, 8, 10], [0, 10, 14], [0, 12, 10]]} /></ToolButton>
                <ToolButton aria-label="Align center"><Lines rows={[[0, 2, 14], [2, 4, 10], [0, 6, 14], [2, 8, 10], [0, 10, 14], [2, 12, 10]]} /></ToolButton>
                <ToolButton aria-label="Align right"><Lines rows={[[0, 2, 14], [4, 4, 10], [0, 6, 14], [4, 8, 10], [0, 10, 14], [4, 12, 10]]} /></ToolButton>
              </Bunch>
              <Bunch>
                <ToolButton aria-label="Decrease indent"><Indent /></ToolButton>
                <ToolButton aria-label="Increase indent"><Indent right /></ToolButton>
              </Bunch>
            </Row>
          </Rows>
          <Divider />
          <Rows>
            <SmallButton $gap={3}><WrapText />Wrap Text</SmallButton>
            <SmallButton $gap={3}><Merge />Merge &amp; Center<Caret /></SmallButton>
          </Rows>
        </RibbonGroup>

        <RibbonGroup w={135} label="Number" launch>
          <Rows>
            <Combo w={127} label="Number format" value="General" />
            <Row>
              <Bunch>
                <ToolButton aria-label="Currency" $w={33}><Currency /><Caret /></ToolButton>
                <ToolButton aria-label="Percent" $w={23}>%</ToolButton>
                <ToolButton aria-label="Comma style" $w={22}><CommaStyle /></ToolButton>
              </Bunch>
              <Bunch>
                <ToolButton aria-label="Increase decimal" $w={21}><IncDecimal /></ToolButton>
                <ToolButton aria-label="Decrease decimal" $w={21}><DecDecimal /></ToolButton>
              </Bunch>
            </Row>
          </Rows>
        </RibbonGroup>

        <RibbonGroup w={173} label="Styles">
          <Big w={69} icon={<CondFormat />} a="Conditional" b="Formatting" />
          <Big w={55} icon={<FormatTable />} a="Format" b="as Table" />
          <Big w={42} icon={<CellStyles />} a="Cell" b="Styles" />
        </RibbonGroup>

        <RibbonGroup w={133} label="Cells" hot>
          <Big w={42} icon={<InsertCells />} a="Insert" />
          <Big w={42} icon={<DeleteCells />} a="Delete" hot />
          <Big w={42} icon={<FormatCells />} a="Format" />
        </RibbonGroup>

        <RibbonGroup w={176} label="Editing">
          <SmallStack $w={81} $ml={3}>
            <SmallButton $gap={3}><Sigma />AutoSum<Caret /></SmallButton>
            <SmallButton $gap={3}><FillDown />Fill<Caret /></SmallButton>
            <SmallButton $gap={3}><Eraser />Clear<Caret /></SmallButton>
          </SmallStack>
          <Big w={40} icon={<SortFilter />} a="Sort &amp;" b="Filter" />
          <Big w={44} icon={<Binoculars />} a="Find &amp;" b="Select" />
        </RibbonGroup>
      </Ribbon>

      <FormulaBar>
        <NameBox>
          <input aria-label="Name box" defaultValue="B2" />
          <Svg w={7} h={4}><path d="M0 0h7L3.500 4z" fill="#000" /></Svg>
        </NameBox>
        <FxArea><Knob /><FxButton>f<small>x</small></FxButton></FxArea>
        <FormulaInput aria-label="Formula" defaultValue="ABC" />
        <ExpandButton aria-label="Expand formula bar"><Svg w={7} h={9} stroke="#000" strokeWidth="1.400"><path d="M.5 1l3 2.500 3-2.500M.5 5l3 2.500 3-2.500" /></Svg></ExpandButton>
      </FormulaBar>

      <Workbook>
        <SheetArea>
          <Sheet>
            <colgroup>
              <col width="26" />
              {columns.map((c) => <col key={c} width={c === "B" ? 92 : 64} />)}
              <col />
            </colgroup>
            <thead>
              <tr>
                <Corner><Svg w={11} h={11}><path d="M11 0v11H0z" fill="#e4eefb" /></Svg></Corner>
                {columns.map((c) => <ColHead key={c} $sel={c === "B"}>{c}</ColHead>)}
                <ColHead />
              </tr>
            </thead>
            <tbody>
              {Array.from({ length: 26 }, (_, i) => i + 1).map((r) => (
                <tr key={r}>
                  <RowHead $sel={r === 2}>{r < 26 && r}</RowHead>
                  {columns.map((c) => <Cell key={c} $sel={c + r === "B2"}>{cells[c + r]}</Cell>)}
                  <Cell />
                </tr>
              ))}
            </tbody>
          </Sheet>
        </SheetArea>
        <VScroll>
          <SplitBox />
          <button aria-label="Scroll up"><Svg w={9} h={5}><path d="M0 5h9L4.500 0z" fill="#36486e" /></Svg></button>
          <VThumb><Grip /></VThumb>
          <VTrack />
          <button aria-label="Scroll down"><Svg w={9} h={5}><path d="M0 0h9L4.500 5z" fill="#36486e" /></Svg></button>
        </VScroll>
      </Workbook>

      <SheetBar>
        <SheetNav>
          <NavArrow label="First sheet" d="M0 0h1.500v7H0zM6 0v7L2 3.500z" />
          <NavArrow label="Previous sheet" d="M5 0v7L1 3.500z" />
          <NavArrow label="Next sheet" d="M1 0v7l4-3.500z" />
          <NavArrow label="Last sheet" d="M5.500 0H7v7H5.500zM1 0v7l4-3.500z" />
        </SheetNav>
        <SheetTab $w={65} $active>Sheet1</SheetTab>
        <SheetTab $w={60}>Sheet2</SheetTab>
        <SheetTab $w={60}>Sheet3</SheetTab>
        <SheetTab $w={30} aria-label="Insert sheet">
          <Svg w={15} h={13}><path d="M4.500 4.500h9v6l-3 2h-6z" fill="#e9f0fa" stroke="#4f6286" /><path d="M4 0v8M0 4h8M1 1l6 6M7 1L1 7" stroke="#e8962a" /><circle cx="4" cy="4" r="1.500" fill="#fff3b0" /></Svg>
        </SheetTab>
        <HScroll>
          <HSplit />
          <HArrow aria-label="Scroll left"><Svg w={5} h={9}><path d="M5 0v9L0 4.500z" fill="#36486e" /></Svg></HArrow>
          <HThumb><Grip $h /></HThumb>
          <HTrack />
          <HArrow aria-label="Scroll right"><Svg w={5} h={9}><path d="M0 0v9l5-4.500z" fill="#36486e" /></Svg></HArrow>
          <HSplit />
        </HScroll>
      </SheetBar>

      <StatusBar>
        <span>Ready</span>
        <Svg w={16}><circle cx="8" cy="8" r="7" fill="#e3edfa" stroke="#5d7fb3" /><path d="M8 4v8M4 8h8" stroke="#45546e" strokeWidth="2" /></Svg>
      </StatusBar>

      <TaskBar>
        <StartButton aria-label="Start"><Svg w={16}><path d="M0 2.300L6.500 1.400V7.500H0zM7.500 1.200L16 0v7.500H7.500zM0 8.500h6.500v6.100L0 13.700zM7.500 8.500H16V16l-8.500-1.200z" fill="#fff" /></Svg></StartButton>
        <SearchBox>
          <Svg w={22}><circle cx="11" cy="11" r="9" stroke="#111" strokeWidth="3" /></Svg>
          <input aria-label="Search" placeholder="Type here to search" />
          <Svg w={14} h={18} stroke="#222"><path d="M4.500 1.500h5v10h-5zM1.500 8v3.500c0 4 11 4 11 0V8M7 14.500V17M4.500 16.500h5" /></Svg>
        </SearchBox>
        <Apps>
          {apps.map((a) => (
            <AppButton key={a.name} aria-label={a.name} $open={a.open} $active={a.active}>
              {a.icon}{a.badge && <Badge>{a.badge}</Badge>}
            </AppButton>
          ))}
        </Apps>
        <Tray>
          <TrayButton aria-label="People" $w={48}><Svg w={15} h={16} stroke="#fff" strokeWidth="1.200"><circle cx="10" cy="3.500" r="2.600" /><circle cx="4.500" cy="7.500" r="2.300" /><path d="M7 9.500c1-3.500 7-3.500 7 1.500M1 15c0-6 7-6 7.500 0" /></Svg></TrayButton>
          <TrayButton aria-label="Hidden icons" $w={24}><Svg w={12} h={8} stroke="#fff" strokeWidth="1.300"><path d="M.5 7L6 1.500 11.500 7" /></Svg></TrayButton>
          <TrayButton aria-label="Network" $w={24}><Svg w={17} h={14} stroke="#fff"><path d="M4 2.500h12.500v7h-12M10.500 10v3M6 13.500h9M.5.500h4v4h-4zM2.500 5v6.500h3" /></Svg></TrayButton>
          <TrayButton aria-label="Volume" $w={24}><Svg w={17} h={14} stroke="#fff"><path d="M.5 4.500h3L7.500 1v12L3.500 9.500h-3zM9.500 4.500c1.300 1.500 1.300 3.500 0 5M11.500 2.500c2.500 3 2.500 6 0 9M13.500 1c3.500 4 3.500 8 0 12" /></Svg></TrayButton>
          <TrayButton $w={34}>ENG</TrayButton>
          <Clock>15:13<br />12-02-2020</Clock>
          <TrayButton aria-label="Notifications" $w={36}><Svg w={17} h={16} stroke="#fff"><path d="M.5.500h16v11.500h-5L8.500 15l-3-3h-5z" /></Svg></TrayButton>
          <ShowDesktop aria-label="Show desktop" />
        </Tray>
      </TaskBar>

      <RunWindow>
        <RunTitle>
          <Svg w={15} h={16}><path d="M1 15c3-3 4-9 5.500-14 1.500 5 3 8.500 5 12M2 13c4-2 7-2 9.500 0" stroke="#1797b8" strokeWidth="1.300" /><circle cx="12.500" cy="13.500" r="1.700" fill="#1797b8" /></Svg>
          <h2>Run Time Window</h2>
          <RunCaption aria-label="Minimize"><Svg w={7} h={7} stroke="#fff" strokeWidth="2"><path d="M1 5h4" /></Svg></RunCaption>
          <RunCaption aria-label="Maximize"><Svg w={7} h={7} stroke="#ddd"><path d="M.5.500h6v6h-6z" /></Svg></RunCaption>
          <RunCaption aria-label="Close"><Svg w={7} h={7} stroke="#fff" strokeWidth="1.700"><path d="M.5.500l6 6M6.500.500l-6 6" /></Svg></RunCaption>
        </RunTitle>
        <RunPanel>
          <strong>CJ01</strong>
          <RunProgressRow>
            <RunProgress><i /></RunProgress>
            <button aria-label="Resume"><Svg w={13}><circle cx="6.500" cy="6.500" r="6" fill="#1b56c9" /><path d="M5 3.500v6l4.500-3z" fill="#fff" /></Svg></button>
            <button aria-label="Stop"><Svg w={13}><circle cx="6.500" cy="6.500" r="6" fill="#1b56c9" /><path d="M4 4l5 5M9 4L4 9" stroke="#fff" strokeWidth="1.800" /></Svg></button>
          </RunProgressRow>
          <RunLine><strong>Line :</strong><span>20 of 45</span><em>(Paused)</em></RunLine>
          <RunLine><strong>Action :</strong><span>Message Box</span></RunLine>
        </RunPanel>
        <RunHint>Use 'Pause' key to pause. Keep 'Esc' key pressed to abort.</RunHint>
      </RunWindow>
      <Watermark><strong>Activate Windows</strong>Go to Settings to activate Windows.</Watermark>
    </Desktop>
  );
}
